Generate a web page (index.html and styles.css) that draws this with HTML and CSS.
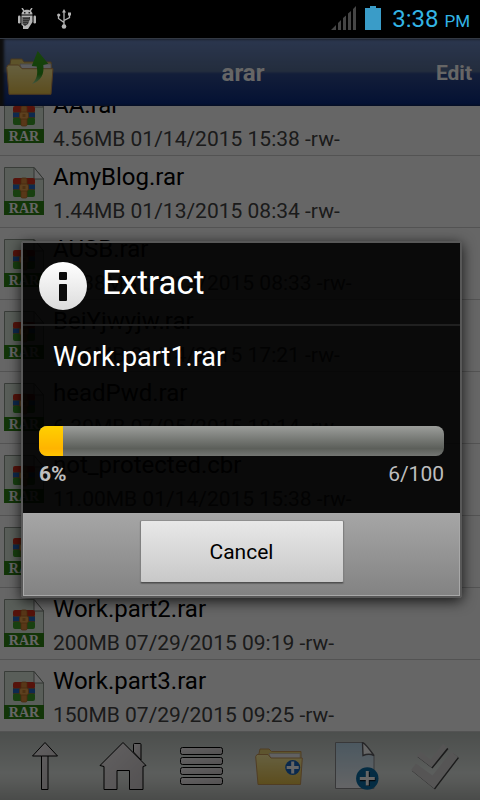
FILE: index.html
```html
<!DOCTYPE html>
<html lang="en">
<head>
  <meta charset="UTF-8">
  <meta name="viewport" content="width=device-width, initial-scale=1.0">
  <title>arar</title>
  <link rel="stylesheet" href="styles.css">
</head>
<body>

  <!-- shared shapes -->
  <svg class="defs" aria-hidden="true">
    <defs>
      <linearGradient id="g-folder" x1="0" y1="0" x2="0" y2="1">
        <stop offset="0" stop-color="#fff0a0"/>
        <stop offset="1" stop-color="#e6c04a"/>
      </linearGradient>
      <linearGradient id="g-up" x1="0" y1="0" x2="0" y2="1">
        <stop offset="0" stop-color="#3fae22"/>
        <stop offset="0.7" stop-color="#2f9a18"/>
        <stop offset="1" stop-color="#a8d8a0"/>
      </linearGradient>
      <linearGradient id="g-gray" x1="0" y1="0" x2="1" y2="1">
        <stop offset="0" stop-color="#f6f2f4"/>
        <stop offset="1" stop-color="#cfc9cb"/>
      </linearGradient>
      <linearGradient id="g-doc" x1="0" y1="0" x2="0" y2="1">
        <stop offset="0" stop-color="#bcdcf0"/>
        <stop offset="1" stop-color="#fbfcff"/>
      </linearGradient>
      <linearGradient id="g-info" x1="0" y1="0" x2="0" y2="1">
        <stop offset="0" stop-color="#ffffff"/>
        <stop offset="1" stop-color="#dcdcdc"/>
      </linearGradient>
      <symbol id="rar" viewBox="0 0 40 48">
        <path d="M.5 .5H30L39.500 12V47.500H.5z" fill="#dfeadf" stroke="#8f9a8f"/>
        <path d="M30 .5V12H39.500z" fill="#fff" stroke="#7c847c"/>
        <rect x="9" y="11" width="22" height="7" rx="2" fill="#d8301c"/>
        <rect x="9" y="17" width="22" height="6" fill="#2468c4"/>
        <rect x="9" y="22" width="22" height="8" rx="2" fill="#3ea028"/>
        <path d="M9 17.500H31M9 22.500H31" stroke="#8a6a50" stroke-width=".8"/>
        <rect x="17" y="11" width="6" height="20" rx="1.500" fill="#dc8a3c" stroke="#b06c28" stroke-width=".8"/>
        <rect x="15.500" y="17" width="9" height="7" rx="2" fill="#e8a04c" stroke="#b06c28" stroke-width=".8"/>
        <rect x="18.500" y="19" width="3" height="3" fill="#c07c30"/>
        <path d="M0 34H40V48H0z" fill="#2e8414"/>
        <text class="rar-label" x="20" y="46" text-anchor="middle">RAR</text>
      </symbol>
    </defs>
  </svg>

  <div class="screen">
    <div class="status-bar">
      <div class="status-left">
        <svg width="18" height="22" viewBox="0 0 18 22">
          <path d="M4 0L6 3M14 0L12 3" stroke="#b4b4b4" stroke-width="1.400"/>
          <path d="M3.500 6.500C3.500 0 14.500 0 14.500 6.500z" fill="#b4b4b4"/>
          <rect x="6" y="4" width="1.500" height="1.500" fill="#222"/>
          <rect x="10.500" y="4" width="1.500" height="1.500" fill="#222"/>
          <rect x="0" y="7.500" width="2.500" height="8" rx="1.200" fill="#b4b4b4"/>
          <rect x="15.500" y="7.500" width="2.500" height="8" rx="1.200" fill="#b4b4b4"/>
          <path d="M3.500 7.500H14.500V14L10 21H5V18L3.500 17z" fill="#b4b4b4"/>
          <path d="M4.500 9H12V11L10 16L7 18L4.500 16z" fill="#333"/>
          <path d="M6 9V17M8 9V17M10 9V15" stroke="#888" stroke-width=".8" stroke-dasharray="1 1"/>
        </svg>
        <svg width="14" height="20" viewBox="0 0 14 20">
          <path d="M7 2V17M7 13.500L1.500 9.500V6M7 11.500L12.500 8.500V5" fill="none" stroke="#b4b4b4" stroke-width="1.300"/>
          <path d="M7 0L9 3.500H5z" fill="#b4b4b4"/>
          <circle cx="7" cy="17.500" r="2.300" fill="#b4b4b4"/>
          <circle cx="1.700" cy="6" r="1.600" fill="#b4b4b4"/>
          <rect x="11" y="3.500" width="3" height="3" fill="#b4b4b4"/>
        </svg>
      </div>
      <div class="status-right">
        <svg width="26" height="24" viewBox="0 0 26 24">
          <path d="M0 24L5 19V24zM7 17L10 14V24H7zM12 12L15 9.500V24H12zM17 7.500L20 5V24H17zM22 3L25 0V24H22z" fill="#454545"/>
        </svg>
        <svg width="16" height="24" viewBox="0 0 16 24">
          <path d="M5 0H11V2H16V24H0V2H5z" fill="#3a9cc8"/>
        </svg>
        <span class="clock">3:38 <small>PM</small></span>
      </div>
    </div>

    <div class="app">
      <header class="header">
        <button type="button" class="header-up" aria-label="Up one folder">
          <svg width="48" height="48" viewBox="0 0 48 48">
            <path d="M3 20L5 10H16L18 13H45L46 22z" fill="#e8cf6a" stroke="#b08a50"/>
            <path d="M14 15H45V22H16z" fill="#e6e6ea" stroke="#a8a8b0" stroke-width=".8"/>
            <path d="M.7 18.500L2 16H12.500L16 19.700H47L45 45.300H3z" fill="url(#g-folder)" stroke="#c08c50"/>
            <path d="M31.700 2L42.300 14.700L37.300 16C38.500 25 35 32 26 35C31 30 32 25 30.700 17.500L25.700 17z" fill="url(#g-up)"/>
          </svg>
        </button>
        <h1 class="header-title">arar</h1>
        <button type="button" class="header-edit">Edit</button>
      </header>

      <ul class="files">
        <li class="file">
          <svg class="file-icon"><use href="#rar"/></svg>
          <div><p class="file-name">AA.rar</p><p class="file-info">4.56MB 01/14/2015 15:38 -rw-</p></div>
        </li>
        <li class="file">
          <svg class="file-icon"><use href="#rar"/></svg>
          <div><p class="file-name">AmyBlog.rar</p><p class="file-info">1.44MB 01/13/2015 08:34 -rw-</p></div>
        </li>
        <li class="file">
          <svg class="file-icon"><use href="#rar"/></svg>
          <div><p class="file-name">AUSB.rar</p><p class="file-info">11.38MB 01/13/2015 08:33 -rw-</p></div>
        </li>
        <li class="file">
          <svg class="file-icon"><use href="#rar"/></svg>
          <div><p class="file-name">BeiYjwyjw.rar</p><p class="file-info">2.46MB 01/14/2015 17:21 -rw-</p></div>
        </li>
        <li class="file">
          <svg class="file-icon"><use href="#rar"/></svg>
          <div><p class="file-name">headPwd.rar</p><p class="file-info">6.39MB 07/05/2015 18:14 -rw-</p></div>
        </li>
        <li class="file">
          <svg class="file-icon"><use href="#rar"/></svg>
          <div><p class="file-name">not_protected.cbr</p><p class="file-info">11.00MB 01/14/2015 15:38 -rw-</p></div>
        </li>
        <li class="file">
          <svg class="file-icon"><use href="#rar"/></svg>
          <div><p class="file-name">Work.part1.rar</p><p class="file-info">200MB 07/29/2015 09:14 -rw-</p></div>
        </li>
        <li class="file">
          <svg class="file-icon"><use href="#rar"/></svg>
          <div><p class="file-name">Work.part2.rar</p><p class="file-info">200MB 07/29/2015 09:19 -rw-</p></div>
        </li>
        <li class="file">
          <svg class="file-icon"><use href="#rar"/></svg>
          <div><p class="file-name">Work.part3.rar</p><p class="file-info">150MB 07/29/2015 09:25 -rw-</p></div>
        </li>
      </ul>

      <nav class="toolbar">
        <button type="button" aria-label="Up">
          <svg width="48" height="48" viewBox="0 0 48 48">
            <path d="M24 .5L36.500 14H27V47.500H20.500V14H11.500z" fill="url(#g-gray)" stroke="#000" stroke-linejoin="round"/>
            <path d="M20.500 14H27" stroke="#000"/>
          </svg>
        </button>
        <button type="button" aria-label="Home">
          <svg width="48" height="48" viewBox="0 0 48 48">
            <path d="M34.500 10V2.500Q34.500 1.500 35.500 1.500H41Q42 1.500 42 2.500V18z" fill="url(#g-gray)" stroke="#000"/>
            <path d="M24 .5L47 23.500L44 24.500V47.500H30.500V28.500H18V47.500H5V24.500L1 23.500z" fill="url(#g-gray)" stroke="#000" stroke-linejoin="round"/>
          </svg>
        </button>
        <button type="button" aria-label="List">
          <svg width="48" height="48" viewBox="0 0 48 48">
            <g fill="url(#g-gray)" stroke="#000">
              <rect x="3.500" y="5.500" width="42" height="7" rx="2"/>
              <rect x="3.500" y="15.500" width="42" height="7" rx="2"/>
              <rect x="3.500" y="25.500" width="42" height="7" rx="2"/>
              <rect x="3.500" y="35.500" width="42" height="7" rx="2"/>
            </g>
          </svg>
        </button>
        <button type="button" aria-label="New folder">
          <svg width="48" height="48" viewBox="0 0 48 48">
            <path d="M3 16L5 7H14L16.500 9.500H46L46 18z" fill="#ecd476" stroke="#c89858"/>
            <path d="M14 11.500H45V18H16z" fill="#f2f2f4" stroke="#c8c0b0" stroke-width=".8"/>
            <path d="M.7 14.500L2 12.500H13L16 16H47.300L45.500 42.500H3z" fill="url(#g-folder)" stroke="#c89858"/>
            <circle cx="37.700" cy="25.500" r="7.500" fill="#1a68c0"/>
            <path d="M37.700 19.500V31.500M31.700 25.500H43.700" stroke="#fff" stroke-width="3"/>
          </svg>
        </button>
        <button type="button" aria-label="New file">
          <svg width="48" height="48" viewBox="0 0 48 48">
            <path d="M2.500 .5H29L41 13.500V46.500H2.500z" fill="url(#g-doc)" stroke="#8c8c90"/>
            <path d="M29.500 .5Q32 1 41 13.500Q36 11 30 13.500z" fill="#fff" stroke="#606064" stroke-width="1.400"/>
            <circle cx="34.300" cy="36.500" r="11.200" fill="#0a6fa8"/>
            <path d="M35 30V44M27 37.500H42.500" stroke="#0a1a28" stroke-width="3.500"/>
            <path d="M34.300 29V43.500M26.800 36.500H41.800" stroke="#fff" stroke-width="3"/>
          </svg>
        </button>
        <button type="button" aria-label="Select all">
          <svg width="48" height="48" viewBox="0 0 48 48">
            <g fill="#444">
              <path d="M34 4L37.500 7L21.500 26.500L6.500 15L10 11.500L21 20.500z"/>
              <path d="M42.500 11.500L48 16L24 47.500L1 29L5.500 24L23.500 36.500z"/>
            </g>
            <g fill="#d6d4d5">
              <path d="M32 2L36.500 5.500L20.500 25.500L5.500 14L9.500 9.500L19.500 17.500z"/>
              <path d="M40.500 9.500L47 15L23 46.500L0 28L5 21.500L21.500 33.500z"/>
            </g>
          </svg>
        </button>
      </nav>

      <div class="backdrop">
        <div class="dialog" role="dialog" aria-labelledby="dialog-title">
          <div class="dialog-head">
            <svg width="48" height="48" viewBox="0 0 48 48">
              <circle cx="24" cy="24" r="24" fill="url(#g-info)"/>
              <rect x="20" y="10" width="8" height="8" rx="1" fill="#0a0a0a"/>
              <rect x="20" y="22" width="8" height="17" rx="1" fill="#0a0a0a"/>
            </svg>
            <h2 id="dialog-title">Extract</h2>
          </div>
          <div class="dialog-body">
            <p class="message">Work.part1.rar</p>
            <div class="bar" role="progressbar" aria-valuenow="6" aria-valuemin="0" aria-valuemax="100">
              <div class="bar-fill" style="width: 6%"></div>
            </div>
            <div class="stats"><b>6%</b><span>6/100</span></div>
          </div>
          <div class="dialog-foot">
            <button type="button" class="cancel">Cancel</button>
          </div>
        </div>
      </div>
    </div>
  </div>

</body>
</html>
```
FILE: styles.css
```css
* {
  box-sizing: border-box;
}
body, h1, h2, p, ul {
  margin: 0;
  padding: 0;
}
body {
  font-family: Roboto, "Liberation Sans", sans-serif;
  background: #000;
}
ul {
  list-style: none;
}
svg {
  display: block;
  flex: none;
}
button {
  border: 0;
  padding: 0;
  background: none;
  font-family: inherit;
}
.defs {
  position: absolute;
  width: 0;
  height: 0;
}
.screen {
  display: flex;
  flex-direction: column;
  height: 100vh;
}

/* status bar */
.status-bar {
  flex: none;
  display: flex;
  justify-content: space-between;
  align-items: center;
  height: 38px;
  padding: 0 10px 0 18px;
}
.status-left {
  display: flex;
  align-items: center;
  gap: 21px;
}
.status-right {
  display: flex;
  align-items: center;
  gap: 8px;
}
.status-right svg {
  margin-bottom: 2px;
}
.clock {
  margin-left: 3px;
  font-size: 24px;
  line-height: 38px;
  padding-top: 2px;
  color: #33b5e5;
}
.clock small {
  font-size: 17px;
}

/* app */
.app {
  position: relative;
  flex: 1;
  min-height: 0;
  display: flex;
  flex-direction: column;
  background: #fff;
}
.header {
  flex: none;
  display: grid;
  grid-template-columns: 48px 1fr 40px;
  align-items: center;
  height: 68px;
  padding: 0 8px 0 6px;
  color: #fff;
  background: linear-gradient(#6c88c4 0, #587099 48%, #304c90 52%, #082a80 100%);
  border-top: 1px solid #8090a8;
  box-shadow: inset 4px 0 3px #222;
}
.header-title {
  font-size: 24px;
  line-height: 28px;
  text-align: center;
}
.header-edit {
  justify-self: end;
  color: #fff;
  font-size: 21px;
  font-weight: 700;
  line-height: 28px;
}
.files {
  flex: 1;
  min-height: 0;
  display: flex;
  flex-direction: column;
  justify-content: flex-end;
  overflow: hidden;
}
.file {
  flex: none;
  display: flex;
  gap: 9px;
  height: 72px;
  padding: 4px 4px 0;
  border-bottom: 1px solid #d0d0d0;
}
.file-icon {
  width: 40px;
  height: 48px;
  margin-top: 7px;
}
.rar-label {
  font: bold 14px "Liberation Serif", serif;
  fill: #fff;
}
.file-name {
  font-size: 24px;
  line-height: 34px;
  color: #000;
}
.file-info {
  font-size: 21px;
  line-height: 34px;
  color: #444;
}
.toolbar {
  flex: none;
  display: grid;
  grid-template-columns: repeat(6, 1fr);
  align-items: center;
  justify-items: center;
  height: 68px;
  padding: 0 6px;
  background: linear-gradient(#bec4c0 0, #e4eae6 60%, #dce0dc 72%, #b8bcb8 100%);
}

/* dialog */
.backdrop {
  position: absolute;
  inset: 0;
  display: flex;
  align-items: center;
  padding: 0 18px 0 21px;
  background: rgba(0, 0, 0, .6);
}
.dialog {
  flex: 1;
  border: 2px solid #585858;
  border-radius: 3px;
  box-shadow: 0 3px 14px rgba(0, 0, 0, .8);
}
.dialog-head,
.dialog-body {
  background: rgba(0, 0, 0, .9);
  background-clip: padding-box;
}
.dialog-head {
  display: flex;
  align-items: center;
  gap: 15px;
  padding: 19px 16px 14px;
  border-bottom: 2px solid #202020;
}
.dialog-head h2 {
  font-size: 33px;
  font-weight: 400;
  line-height: 40px;
  padding-bottom: 6px;
  color: #fff;
}
.dialog-body {
  padding: 15px 16px 26px;
}
.message {
  padding-left: 14px;
  font-size: 27px;
  line-height: 32px;
  color: #fff;
}
.bar {
  height: 30px;
  margin: 53px 0 5px;
  border-radius: 8px;
  overflow: hidden;
  background: linear-gradient(#9c9e9b 0, #5c5f5a 75%, #747673 100%);
}
.bar-fill {
  height: 100%;
  background: linear-gradient(#ffd000 0, #ffb400 75%, #ffc400 100%);
}
.stats {
  display: flex;
  justify-content: space-between;
  font-size: 21px;
  line-height: 26px;
  color: #bebebe;
}
.dialog-foot {
  display: flex;
  justify-content: center;
  padding: 7px 0 13px;
  background: linear-gradient(#a6a6a6, #828282);
  box-shadow: inset 0 0 0 1px #a8a8a8;
}
.cancel {
  width: 204px;
  height: 63px;
  padding-top: 2px;
  border: 1px solid #808080;
  border-top-color: #909090;
  border-bottom-color: #505050;
  border-radius: 2px;
  background: linear-gradient(#e8e8e8, #c8c8c8);
  box-shadow: 0 1px 1px #666;
  font-size: 21px;
  color: #000;
}
```
